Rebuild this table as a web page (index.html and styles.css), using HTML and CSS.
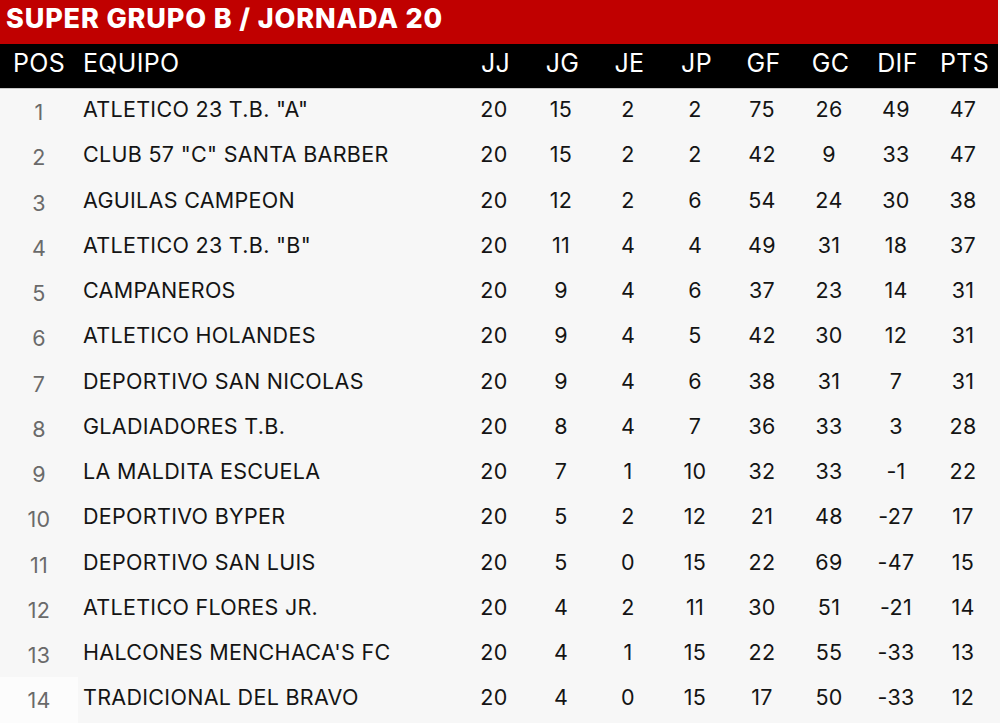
FILE: index.html
```html
<!DOCTYPE html>
<html lang="es">
<head>
<meta charset="utf-8">
<title>Super Grupo B / Jornada 20</title>
<link rel="stylesheet" href="styles.css">
</head>
<body>
<div class="board">
  <h1 class="title">SUPER GRUPO B / JORNADA 20</h1>
  <div class="head">
    <span class="pos">POS</span><span class="team">EQUIPO</span>
    <span>JJ</span><span>JG</span><span>JE</span><span>JP</span><span>GF</span><span>GC</span><span>DIF</span><span>PTS</span>
  </div>
  <div class="rows">
    <div class="row"><span class="pos">1</span><span class="team">ATLETICO 23 T.B. "A"</span><span>20</span><span>15</span><span>2</span><span>2</span><span>75</span><span>26</span><span>49</span><span>47</span></div>
    <div class="row"><span class="pos">2</span><span class="team">CLUB 57 "C" SANTA BARBER</span><span>20</span><span>15</span><span>2</span><span>2</span><span>42</span><span>9</span><span>33</span><span>47</span></div>
    <div class="row"><span class="pos">3</span><span class="team">AGUILAS CAMPEON</span><span>20</span><span>12</span><span>2</span><span>6</span><span>54</span><span>24</span><span>30</span><span>38</span></div>
    <div class="row"><span class="pos">4</span><span class="team">ATLETICO 23 T.B. "B"</span><span>20</span><span>11</span><span>4</span><span>4</span><span>49</span><span>31</span><span>18</span><span>37</span></div>
    <div class="row"><span class="pos">5</span><span class="team">CAMPANEROS</span><span>20</span><span>9</span><span>4</span><span>6</span><span>37</span><span>23</span><span>14</span><span>31</span></div>
    <div class="row"><span class="pos">6</span><span class="team">ATLETICO HOLANDES</span><span>20</span><span>9</span><span>4</span><span>5</span><span>42</span><span>30</span><span>12</span><span>31</span></div>
    <div class="row"><span class="pos">7</span><span class="team">DEPORTIVO SAN NICOLAS</span><span>20</span><span>9</span><span>4</span><span>6</span><span>38</span><span>31</span><span>7</span><span>31</span></div>
    <div class="row"><span class="pos">8</span><span class="team">GLADIADORES T.B.</span><span>20</span><span>8</span><span>4</span><span>7</span><span>36</span><span>33</span><span>3</span><span>28</span></div>
    <div class="row"><span class="pos">9</span><span class="team">LA MALDITA ESCUELA</span><span>20</span><span>7</span><span>1</span><span>10</span><span>32</span><span>33</span><span>-1</span><span>22</span></div>
    <div class="row"><span class="pos">10</span><span class="team">DEPORTIVO BYPER</span><span>20</span><span>5</span><span>2</span><span>12</span><span>21</span><span>48</span><span>-27</span><span>17</span></div>
    <div class="row"><span class="pos">11</span><span class="team">DEPORTIVO SAN LUIS</span><span>20</span><span>5</span><span>0</span><span>15</span><span>22</span><span>69</span><span>-47</span><span>15</span></div>
    <div class="row"><span class="pos">12</span><span class="team">ATLETICO FLORES JR.</span><span>20</span><span>4</span><span>2</span><span>11</span><span>30</span><span>51</span><span>-21</span><span>14</span></div>
    <div class="row"><span class="pos">13</span><span class="team">HALCONES MENCHACA'S FC</span><span>20</span><span>4</span><span>1</span><span>15</span><span>22</span><span>55</span><span>-33</span><span>13</span></div>
    <div class="row last"><span class="pos">14</span><span class="team">TRADICIONAL DEL BRAVO</span><span>20</span><span>4</span><span>0</span><span>15</span><span>17</span><span>50</span><span>-33</span><span>12</span></div>
  </div>
</div>
</body>
</html>
```

FILE: styles.css
```css
html, body {
  margin: 0;
  padding: 0;
  background: #f7f7f7;
}
body {
  width: 1000px;
  height: 723px;
  overflow: hidden;
  font-family: Inter, "Open Sans", sans-serif;
}
.board {
  width: 998px;
}
.title {
  margin: 0;
  height: 44px;
  background: #c00000;
  color: #fff;
  font-size: 27px;
  font-weight: 800;
  line-height: 37px;
  padding-left: 6px;
  letter-spacing: 0.85px;
  box-sizing: border-box;
}
.head {
  display: grid;
  grid-template-columns: 78px 1fr repeat(8, 67px);
  height: 44px;
  background: #000;
  color: #fff;
  font-size: 25px;
  letter-spacing: 0.3px;
  line-height: 38px;
  border-bottom: 1px solid #c8c8c8;
  text-align: center;
}
.head .team {
  text-align: left;
  padding-left: 5px;
}
.rows {
  display: flex;
  flex-direction: column;
}
.row {
  display: grid;
  grid-template-columns: 78px 1fr repeat(8, 67px);
  height: 45.25px;
  line-height: 40px;
  font-size: 21.5px;
  letter-spacing: 0.3px;
  color: #141414;
  text-align: center;
}
.row span {
  padding-right: 3px;
}
.row .team {
  text-align: left;
  padding-left: 5px;
  padding-right: 0;
}
.row .pos {
  color: #6a6a6a;
  padding-top: 3px;
  padding-right: 0;
  line-height: 40px;
}
.row.last .pos {
  background: #fcfcfc;
}
```
